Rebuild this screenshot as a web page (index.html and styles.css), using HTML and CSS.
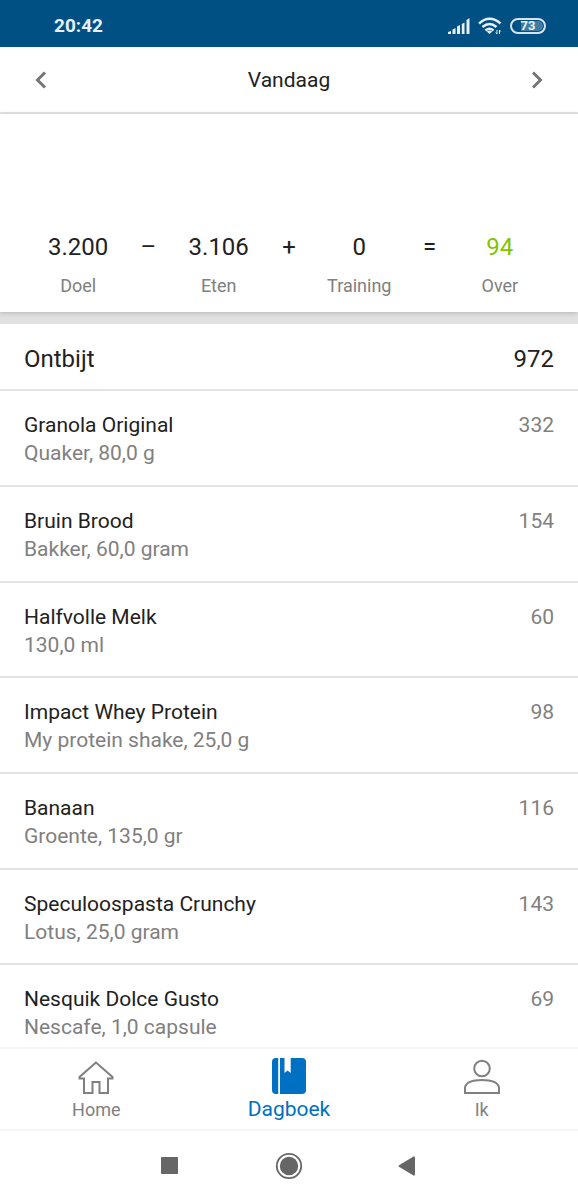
FILE: index.html
```html
<!DOCTYPE html>
<html lang="nl">
<head>
<meta charset="utf-8">
<meta name="viewport" content="width=device-width, initial-scale=1">
<title>Dagboek</title>
<link rel="stylesheet" href="styles.css">
</head>
<body>
<div class="app">
  <div class="status">
    <span class="clock">20:42</span>
    <div class="status-icons">
      <svg class="signal" width="22" height="16" viewBox="0 0 22 16" aria-hidden="true"><path d="M0 16v-2l3-1v3zM4.500 16v-4.500l3-1.500v6zM9 16V8.500L12 7v9zM13.800 16V6l2.700-1.500V16zM18.500 16V2l3-2v16z"/></svg>
      <svg class="wifi" width="24" height="18" viewBox="0 0 24 18" aria-hidden="true"><g fill="none" stroke-width="2.500"><path d="M1 6.500Q11.500 -3 22.500 6.500"/><path d="M4.500 10Q11.500 4 18.500 10"/><path d="M7.500 13.500Q11.500 10 15.500 13.500"/></g><path class="solid" d="M8.800 14.500Q11.500 12.500 14.200 14.500L11.500 17z"/><path d="M19 13v4l-1.200-1.500M21.500 17v-4l1.200 1.500" fill="none" stroke-width="1"/></svg>
      <span class="battery"><span class="battery-level">73</span></span>
    </div>
  </div>

  <header class="datebar">
    <button class="arrow" aria-label="Vorige dag"><svg width="12" height="18" viewBox="0 0 12 18"><path d="M10 1.500L2.500 9l7.500 7.500"/></svg></button>
    <h1 class="date">Vandaag</h1>
    <button class="arrow" aria-label="Volgende dag"><svg width="12" height="18" viewBox="0 0 12 18"><path d="M2 1.500L9.500 9 2 16.500"/></svg></button>
  </header>

  <section class="summary">
    <div class="cell"><span class="value">3.200</span><span class="label">Doel</span></div>
    <span class="operator">–</span>
    <div class="cell"><span class="value">3.106</span><span class="label">Eten</span></div>
    <span class="operator">+</span>
    <div class="cell"><span class="value">0</span><span class="label">Training</span></div>
    <span class="operator">=</span>
    <div class="cell"><span class="value left-over">94</span><span class="label">Over</span></div>
  </section>

  <main class="diary">
    <div class="meal"><h2 class="meal-name">Ontbijt</h2><span>972</span></div>
    <ul class="foods">
      <li class="food"><div><p class="name">Granola Original</p><p class="detail">Quaker, 80,0 g</p></div><span class="kcal">332</span></li>
      <li class="food"><div><p class="name">Bruin Brood</p><p class="detail">Bakker, 60,0 gram</p></div><span class="kcal">154</span></li>
      <li class="food"><div><p class="name">Halfvolle Melk</p><p class="detail">130,0 ml</p></div><span class="kcal">60</span></li>
      <li class="food"><div><p class="name">Impact Whey Protein</p><p class="detail">My protein shake, 25,0 g</p></div><span class="kcal">98</span></li>
      <li class="food"><div><p class="name">Banaan</p><p class="detail">Groente, 135,0 gr</p></div><span class="kcal">116</span></li>
      <li class="food"><div><p class="name">Speculoospasta Crunchy</p><p class="detail">Lotus, 25,0 gram</p></div><span class="kcal">143</span></li>
      <li class="food"><div><p class="name">Nesquik Dolce Gusto</p><p class="detail">Nescafe, 1,0 capsule</p></div><span class="kcal">69</span></li>
    </ul>
  </main>

  <nav class="tabs">
    <a class="tab" href="#home"><svg width="36" height="36" viewBox="0 0 36 36" aria-hidden="true"><path d="M18 3.500L1.500 18v1.500H6V34h8.500V23h7v11H30V19.500h4.500V18z"/></svg><span>Home</span></a>
    <a class="tab active" href="#dagboek" aria-current="page"><svg width="36" height="36" viewBox="0 0 36 36" aria-hidden="true"><path d="M7.200 0v36H5a4 4 0 0 1-4-4V4a4 4 0 0 1 4-4zM9 0h4.500v15l3.100-2.500 3.100 2.500V0H31a4 4 0 0 1 4 4v28a4 4 0 0 1-4 4H9z"/></svg><span>Dagboek</span></a>
    <a class="tab" href="#ik"><svg width="36" height="36" viewBox="0 0 36 36" aria-hidden="true"><circle cx="18" cy="9.500" r="7.800"/><path d="M1 34v-5.500C2 23.500 9 21 18 21s16 2.500 17 7.500V34z"/></svg><span>Ik</span></a>
  </nav>

  <div class="system">
    <button class="key" aria-label="Recente apps"><svg width="28" height="28" viewBox="0 0 28 28"><rect x="5" y="5" width="17" height="17" rx="1"/></svg></button>
    <button class="key" aria-label="Startscherm"><svg width="28" height="28" viewBox="0 0 28 28"><circle cx="14" cy="14" r="12.200" fill="none" stroke="#666" stroke-width="1.800"/><circle cx="14" cy="14" r="9.200"/></svg></button>
    <button class="key" aria-label="Terug"><svg width="28" height="28" viewBox="0 0 28 28"><path d="M5 13.300L19.500 4.600q1.500-.6 1.500.9v17q0 1.500-1.500.9L5 14.700q-1-.7 0-1.400z"/></svg></button>
  </div>
</div>
</body>
</html>
```
FILE: styles.css
```css
* { box-sizing: border-box; margin: 0; padding: 0; }
body { font-family: Roboto, "Liberation Sans", sans-serif; color: #212121; background: #fff; }
button { border: 0; background: none; display: flex; align-items: center; justify-content: center; cursor: pointer; }
.app { display: flex; flex-direction: column; height: 100vh; }

.status { flex: none; display: flex; justify-content: space-between; align-items: center; padding: 12px 32px 8px 54px; height: 47px; background: #005083; color: #e8eff5; }
.clock { font-size: 19px; font-weight: 700; }
.status-icons { display: flex; align-items: center; gap: 8px; }
.signal { fill: #e8eff5; }
.wifi { stroke: #e8eff5; }
.wifi .solid { fill: #e8eff5; stroke: none; }
.battery { width: 36px; height: 16px; padding: 1px; border: 2px solid #d5e3ed; border-radius: 8px; }
.battery-level { display: block; height: 10px; border-radius: 5px; background: linear-gradient(90deg, #005083 8px, #407ca2 8px); font-size: 13px; font-weight: 700; line-height: 10px; text-align: center; }

.datebar { flex: none; display: flex; justify-content: space-between; align-items: center; height: 67px; padding: 1px 21px 0; border-bottom: 2px solid #e5e5e5; }
.arrow { width: 40px; height: 48px; }
.arrow path { fill: none; stroke: #757575; stroke-width: 3; }
.date { font-size: 21px; font-weight: 400; }

.summary { position: relative; flex: none; display: grid; grid-template-columns: repeat(7, 1fr); padding: 119px 43px 12px; box-shadow: 0 1px 5px rgba(0, 0, 0, .2); text-align: center; font-size: 24px; line-height: 28px; }
.cell { display: flex; flex-direction: column; align-items: center; gap: 11px; }
.label { font-size: 18px; color: #808080; }
.left-over { color: #85c400; }

.diary { flex: 1; min-height: 0; overflow: hidden; border-top: 12px solid #e1e1e1; }
.meal { display: flex; justify-content: space-between; align-items: center; height: 67px; padding: 4px 24px 0; border-bottom: 2px solid #e2e2e2; font-size: 24px; }
.meal-name { font-size: 24px; font-weight: 400; }
.foods { list-style: none; }
.food { display: flex; justify-content: space-between; padding: 20px 24px 18px; border-bottom: 2px solid #e2e2e2; font-size: 21px; line-height: 28px; }
.food:nth-child(3n) { padding-bottom: 17px; }
.detail, .kcal { color: #808080; }

.tabs { flex: none; display: grid; grid-template-columns: repeat(3, 1fr); height: 84px; border-top: 2px solid #f6f6f6; border-bottom: 2px solid #f5f5f5; }
.tab { display: flex; flex-direction: column; align-items: center; justify-content: center; gap: 3px; padding-top: 3px; color: #808080; font-size: 18px; line-height: 24px; text-decoration: none; }
.tab svg { fill: none; stroke: #808080; stroke-width: 2; }
.active { padding-top: 0; color: #0070c2; font-size: 21px; }
.active svg { fill: #0070c2; stroke: none; }
.system { flex: none; display: grid; grid-template-columns: repeat(3, 1fr); height: 69px; padding: 0 110px; }
.key svg { fill: #666; }
```
